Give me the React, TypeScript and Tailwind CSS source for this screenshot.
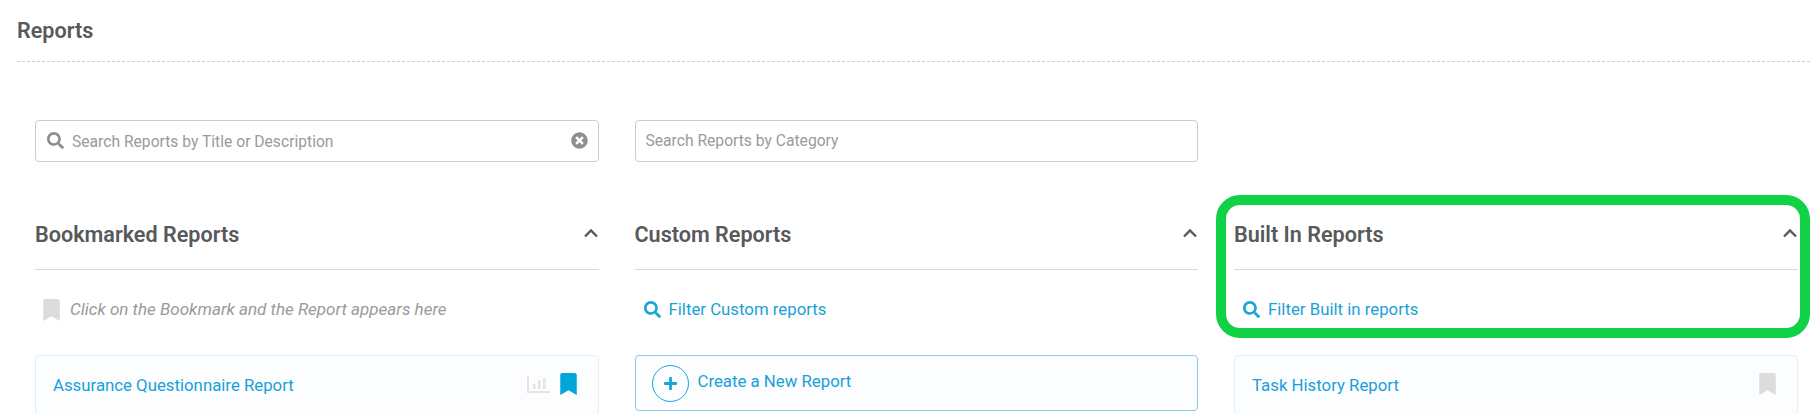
import React from "react";
import { FaSearch, FaBookmark, FaTimesCircle, FaPlus } from "react-icons/fa";

function Chevron() {
  return (
    <svg width="16" height="10" viewBox="0 0 16 10" fill="none" className="block">
      <path d="M2 8.5 L8 2.5 L14 8.5" stroke="#58595b" strokeWidth="2.4" />
    </svg>
  );
}

function ChartIcon() {
  return (
    <svg width="23" height="17" viewBox="0 0 23 17" className="block">
      <g fill="#e4e4e4">
        <rect x="0" y="0" width="2" height="17" />
        <rect x="0" y="15" width="23" height="2" />
        <rect x="6" y="8" width="2.5" height="5" />
        <rect x="11" y="4" width="2.5" height="9" />
        <rect x="16" y="2" width="2.5" height="11" />
      </g>
    </svg>
  );
}

function SectionHeader({ title }: { title: string }) {
  return (
    <div className="flex h-[60px] items-start justify-between border-b border-[#d9d9d9] pt-[11px]">
      <h2 className="text-[21.6px] leading-[28px] font-semibold text-[#58595b]">{title}</h2>
      <div className="pt-[7px]">
        <Chevron />
      </div>
    </div>
  );
}

function FilterRow({ label }: { label: string }) {
  return (
    <div className="flex h-[85px] items-center pb-[6px] pl-[9px] text-[16.8px] text-[#1a9fd9]">
      <FaSearch className="mr-[8px] h-[17px] w-[17px] text-[#1ba5d8]" />
      <span>{label}</span>
    </div>
  );
}

function ReportCard({ title, children }: { title: string; children: React.ReactNode }) {
  return (
    <div className="flex h-[60px] items-start justify-between rounded-[4px] border border-[#e3f0fa] bg-[#fbfdff] pt-[16px] pr-[21px] pl-[17px]">
      <span className="text-[16.8px] leading-[26px] text-[#1a9fd9]">{title}</span>
      <div className="mt-[1px] flex items-start">{children}</div>
    </div>
  );
}

export default function App() {
  return (
    <div className="h-[414px] w-[1810px] overflow-hidden bg-white font-['Roboto',sans-serif]">
      <div className="ml-[17px] h-[62px] border-b border-dashed border-[#cfcfcf]">
        <h1 className="pt-[17px] text-[21.6px] leading-[28px] font-semibold text-[#58595b]">Reports</h1>
      </div>

      <div className="grid grid-cols-[563.5px_563.5px_563.5px] gap-x-[36px] pt-[58px] pl-[35px]">
        <div className="relative flex h-[41.5px] items-center rounded-[4px] border border-[#cccccc] pr-[10px] pl-[11px]">
          <FaSearch className="mr-[8px] h-[17px] w-[17px] text-[#8f8f8f]" />
          <span className="flex-1 pt-[1px] text-[15.65px] text-[#9a9a9a]">Search Reports by Title or Description</span>
          <FaTimesCircle className="h-[17px] w-[17px] text-[#8f8f8f]" />
        </div>
        <div className="flex h-[41.5px] items-center rounded-[4px] border border-[#cccccc] pl-[10px]">
          <span className="text-[15.65px] text-[#9a9a9a]">Search Reports by Category</span>
        </div>
        <div />
      </div>

      <div className="grid grid-cols-[563.5px_563.5px_563.5px] gap-x-[36px] pt-[48.5px] pl-[35px]">
        <section>
          <SectionHeader title="Bookmarked Reports" />
          <div className="flex h-[85px] items-center pb-[6px] pl-[8px]">
            <FaBookmark className="mr-[10px] h-[22px] w-[17px] text-[#dcdcdc]" />
            <span className="text-[17px] text-[#9a9a9a] italic">Click on the Bookmark and the Report appears here</span>
          </div>
          <ReportCard title="Assurance Questionnaire Report">
            <div className="mt-[3px] mr-[10px]">
              <ChartIcon />
            </div>
            <FaBookmark className="h-[22px] w-[17px] text-[#00a5d9]" />
          </ReportCard>
        </section>

        <section>
          <SectionHeader title="Custom Reports" />
          <FilterRow label="Filter Custom reports" />
          <div className="flex h-[56px] items-center rounded-[4px] border border-[#8cc8ea] bg-[#fbfdff] pl-[16px]">
            <div className="mr-[9px] flex h-[37px] w-[37px] items-center justify-center rounded-full border border-[#1ba5d8]">
              <FaPlus className="h-[15px] w-[15px] text-[#1ba5d8]" />
            </div>
            <span className="pb-[3px] text-[16.8px] text-[#1a9fd9]">Create a New Report</span>
          </div>
        </section>

        <section className="relative">
          <SectionHeader title="Built In Reports" />
          <FilterRow label="Filter Built in reports" />
          <ReportCard title="Task History Report">
            <FaBookmark className="h-[22px] w-[17px] text-[#dcdcdc]" />
          </ReportCard>
          <div className="pointer-events-none absolute top-[-15px] right-[-12.5px] left-[-18px] h-[143px] rounded-[24px] border-[10px] border-[#11d246]" />
        </section>
      </div>
    </div>
  );
}
